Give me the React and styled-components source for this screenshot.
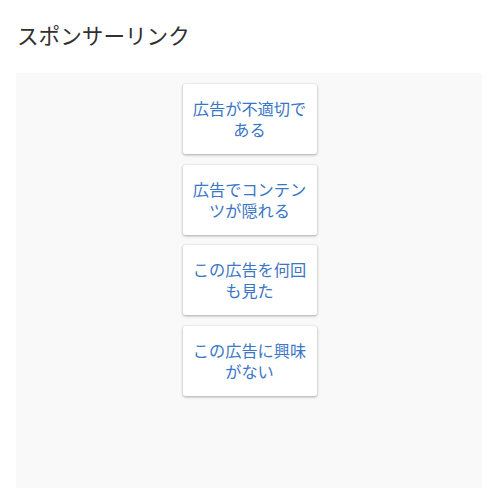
import React from "react";
import styled, { createGlobalStyle } from "styled-components";

const Global = createGlobalStyle`
  html, body { margin: 0; padding: 0; background: #ffffff; }
  body { font-family: "Noto Sans CJK JP", "Noto Sans", sans-serif; }
`;

const Page = styled.div`
  width: 500px;
  height: 500px;
  box-sizing: border-box;
  padding: 20px 18px 0 16px;
  display: flex;
  flex-direction: column;
`;

const Title = styled.h2`
  margin: 0 0 0 1px;
  font-size: 21.6px;
  font-weight: 400;
  line-height: 29px;
  color: #303030;
`;

const Panel = styled.div`
  margin-top: 24px;
  height: 415px;
  background: #f9f9f9;
  display: flex;
  flex-direction: column;
  align-items: center;
  gap: 10.5px;
  padding-top: 11px;
  box-sizing: border-box;
`;

const Card = styled.div`
  width: 134px;
  height: 70px;
  box-sizing: border-box;
  margin-left: 1px;
  padding: 0 9px;
  background: #ffffff;
  border-radius: 2px;
  box-shadow: 0 1px 3px rgba(0, 0, 0, 0.32), 0 0 1px rgba(0, 0, 0, 0.14);
  display: flex;
  align-items: center;
  justify-content: center;
  text-align: center;
  font-size: 16.2px;
  line-height: 21px;
  color: #3a76c6;
`;

const items = [
  "広告が不適切である",
  "広告でコンテンツが隠れる",
  "この広告を何回も見た",
  "この広告に興味がない",
];

export default function App() {
  return (
    <>
      <Global />
      <Page>
        <Title>スポンサーリンク</Title>
        <Panel>
          {items.map((t) => (
            <Card key={t}>{t}</Card>
          ))}
        </Panel>
      </Page>
    </>
  );
}
